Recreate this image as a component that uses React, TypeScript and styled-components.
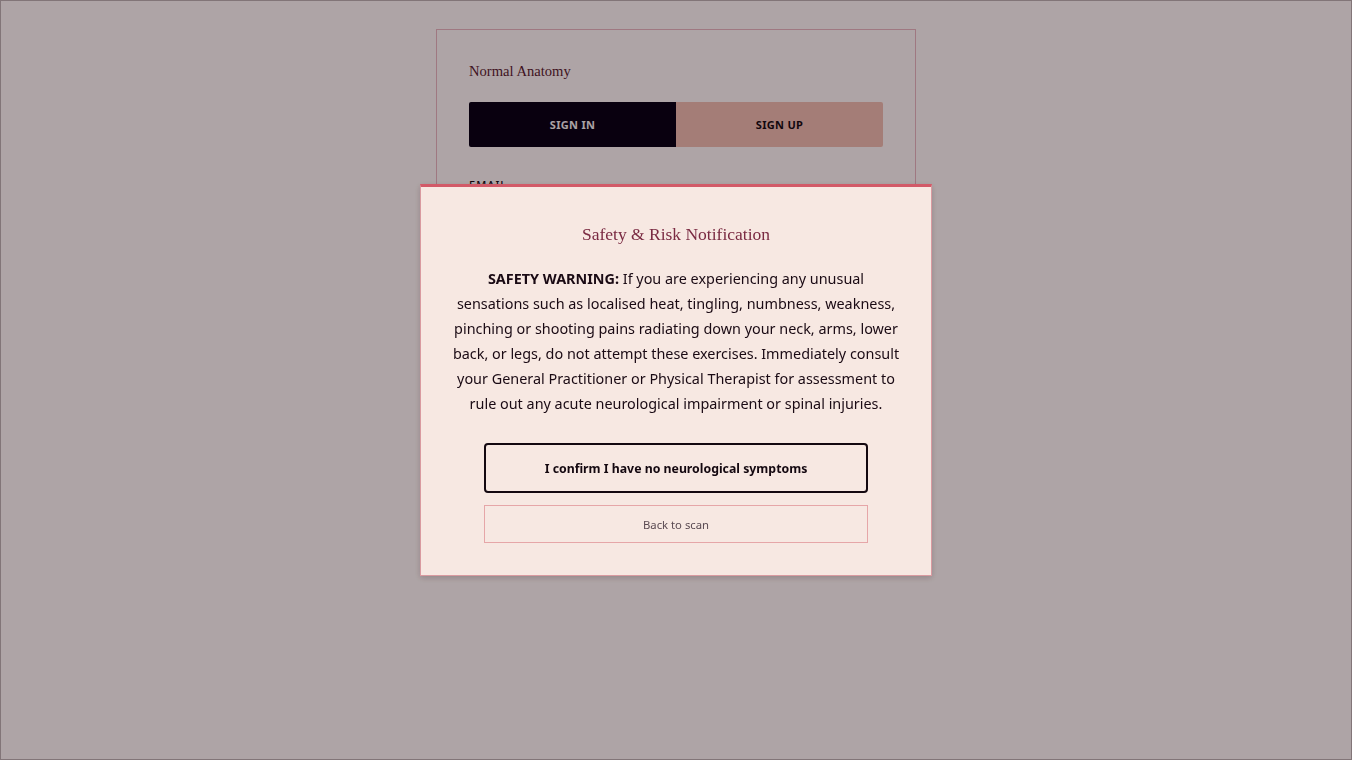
import React from "react";
import styled, { createGlobalStyle } from "styled-components";

const GlobalStyle = createGlobalStyle`
  html, body {
    margin: 0;
    padding: 0;
    height: 100%;
  }
  body {
    background: #f6e8ea;
    font-family: "Noto Sans", "Open Sans", sans-serif;
    color: #1a0a14;
  }
  * { box-sizing: border-box; }
`;

const Page = styled.div`
  min-height: 100vh;
  display: flex;
  justify-content: center;
  align-items: flex-start;
  padding-top: 28px;
  border: 1px solid #d8c8cc;
`;

const AuthCard = styled.section`
  width: 480px;
  border: 1px solid #e0a9b6;
  padding: 33px 32px 40px;
  display: flex;
  flex-direction: column;
`;

const Brand = styled.h1`
  margin: 0 0 22px;
  font-family: "Liberation Serif", "DejaVu Serif", serif;
  font-weight: 400;
  font-size: 14.6px;
  color: #5a1a30;
`;

const Tabs = styled.div`
  display: flex;
  height: 45px;
  border-radius: 2px;
  overflow: hidden;
`;

const Tab = styled.button<{ $active?: boolean }>`
  flex: 1;
  border: 0;
  font-family: "Noto Sans", "Open Sans", sans-serif;
  font-weight: 700;
  font-size: 11px;
  letter-spacing: 0.3px;
  background: ${(p) => (p.$active ? "#0e0016" : "#e8b1a8")};
  color: ${(p) => (p.$active ? "#f0e4e8" : "#1a0a14")};
`;

const FieldLabel = styled.label`
  margin-top: 30px;
  font-size: 11px;
  letter-spacing: 1px;
  font-weight: 500;
  color: #1a0a14;
`;

const Overlay = styled.div`
  position: fixed;
  inset: 0;
  background: rgba(0, 0, 0, 0.29);
  display: flex;
  align-items: center;
  justify-content: center;
  border: 1px solid rgba(60, 40, 45, 0.25);
`;

const Modal = styled.div`
  width: 512px;
  background: #f7e8e2;
  border: 1px solid #d99aa0;
  border-top: 3px solid #d25a68;
  box-shadow: 0 2px 6px rgba(40, 10, 20, 0.2);
  padding: 37px 24px 32px;
  display: flex;
  flex-direction: column;
  align-items: center;
`;

const Title = styled.h2`
  margin: 0 0 21px;
  font-family: "Liberation Serif", "DejaVu Serif", serif;
  font-weight: 400;
  font-size: 17.5px;
  color: #7a2a42;
  text-align: center;
`;

const Body = styled.p`
  margin: 0 0 27px;
  font-size: 14.4px;
  line-height: 25px;
  text-align: center;
  white-space: nowrap;
  color: #1a0a14;

  strong {
    font-weight: 700;
  }
`;

const Actions = styled.div`
  width: 384px;
  display: flex;
  flex-direction: column;
  gap: 12px;
`;

const ConfirmButton = styled.button`
  height: 50px;
  border: 2px solid #140810;
  border-radius: 4px;
  background: transparent;
  font-family: "Noto Sans", "Open Sans", sans-serif;
  font-weight: 700;
  font-size: 12.3px;
  color: #140810;
`;

const BackButton = styled.button`
  height: 38px;
  border: 1px solid #e6a6a8;
  background: transparent;
  font-family: "Noto Sans", "Open Sans", sans-serif;
  font-size: 11.3px;
  color: #5a4a52;
`;

const warningLines = [
  "sensations such as localised heat, tingling, numbness, weakness,",
  "pinching or shooting pains radiating down your neck, arms, lower",
  "back, or legs, do not attempt these exercises. Immediately consult",
  "your General Practitioner or Physical Therapist for assessment to",
  "rule out any acute neurological impairment or spinal injuries.",
];

export default function App() {
  return (
    <>
      <GlobalStyle />
      <Page>
        <AuthCard>
          <Brand>Normal Anatomy</Brand>
          <Tabs>
            <Tab $active>SIGN IN</Tab>
            <Tab>SIGN UP</Tab>
          </Tabs>
          <FieldLabel>EMAIL</FieldLabel>
        </AuthCard>
      </Page>
      <Overlay>
        <Modal role="dialog" aria-modal="true">
          <Title>Safety &amp; Risk Notification</Title>
          <Body>
            <strong>SAFETY WARNING:</strong> If you are experiencing any unusual
            {warningLines.map((line) => (
              <React.Fragment key={line}>
                <br />
                {line}
              </React.Fragment>
            ))}
          </Body>
          <Actions>
            <ConfirmButton>I confirm I have no neurological symptoms</ConfirmButton>
            <BackButton>Back to scan</BackButton>
          </Actions>
        </Modal>
      </Overlay>
    </>
  );
}
